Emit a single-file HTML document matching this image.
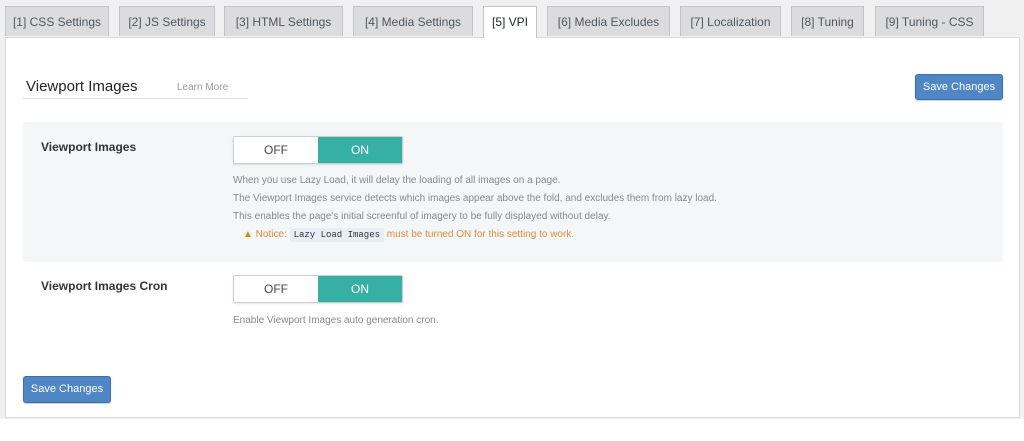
<!DOCTYPE html><html><head><style>
body{margin:0;width:1024px;height:441px;background:#f0f0f1;font-family:"Liberation Sans",sans-serif;position:relative;overflow:hidden}
.a{position:absolute}
.tab{position:absolute;top:6px;height:30px;background:#dcdcde;border:1px solid #c3c4c7;border-bottom:none;font-size:12px;color:#50575e;line-height:30px;text-align:center;box-sizing:border-box;white-space:nowrap}
.tab.on{background:#fff;color:#1d2327;height:32px;z-index:2}
.panel{position:absolute;left:5px;top:37px;width:1015px;height:381px;background:#fff;border:1px solid #dcdcde;box-sizing:border-box}
.btn{position:absolute;background:#4f86c6;border:1px solid #3b6fa8;color:#fff;font-size:11px;border-radius:3px;text-align:center;box-sizing:border-box;box-shadow:0 1px 1px rgba(0,0,0,.2)}
.tg{position:absolute;left:233px;width:170px;height:28px;border:1px solid #ccc;border-radius:2px;box-sizing:border-box;display:flex;font-size:12px;box-shadow:0 1px 2px rgba(0,0,0,.1)}
.tg div{flex:1;text-align:center;line-height:26px}
.tg .off{color:#444;background:#fff}
.tg .onb{background:#36b0a4;color:#fff}
.lbl{position:absolute;left:41px;font-size:12px;font-weight:bold;color:#333}
.d{position:absolute;left:233px;font-size:10px;color:#888;line-height:18px}
</style></head><body>
<div class="tab" style="left:5px;width:104px">[1] CSS Settings</div>
<div class="tab" style="left:119px;width:96px">[2] JS Settings</div>
<div class="tab" style="left:224px;width:119px">[3] HTML Settings</div>
<div class="tab" style="left:353px;width:120px">[4] Media Settings</div>
<div class="tab on" style="left:483px;width:54px">[5] VPI</div>
<div class="tab" style="left:547px;width:123px">[6] Media Excludes</div>
<div class="tab" style="left:680px;width:101px">[7] Localization</div>
<div class="tab" style="left:791px;width:73px">[8] Tuning</div>
<div class="tab" style="left:875px;width:109px">[9] Tuning - CSS</div>
<div class="panel"></div>
<div class="a" style="left:0;top:419px;width:1024px;height:22px;background:#fff"></div>
<div class="a" style="left:26px;top:78px;font-size:15px;color:#222">Viewport Images</div>
<div class="a" style="left:177px;top:82px;font-size:10px;color:#999">Learn More</div>
<div class="a" style="left:23px;top:98px;width:225px;height:1px;background:#ddd"></div>
<div class="btn" style="left:915px;top:74px;width:88px;height:26px;line-height:24px">Save Changes</div>
<div class="a" style="left:23px;top:122px;width:980px;height:140px;background:#f4f7f7;border-radius:3px"></div>
<div class="lbl" style="top:140px">Viewport Images</div>
<div class="tg" style="top:136px"><div class="off">OFF</div><div class="onb">ON</div></div>
<div class="d" style="top:172px">When you use Lazy Load, it will delay the loading of all images on a page.<br>The Viewport Images service detects which images appear above the fold, and excludes them from lazy load.<br>This enables the page's initial screenful of imagery to be fully displayed without delay.</div>
<div class="a" style="left:243px;top:227px;font-size:10px;color:#e38a3a;line-height:16px"><span style="color:#d98b00">▲</span> Notice: <span style="font-family:'Liberation Mono',monospace;font-size:9px;color:#333;background:#e8eef3;padding:2px 4px">Lazy Load Images</span> must be turned ON for this setting to work.</div>
<div class="lbl" style="top:279px">Viewport Images Cron</div>
<div class="tg" style="top:275px"><div class="off">OFF</div><div class="onb">ON</div></div>
<div class="d" style="top:312px">Enable Viewport Images auto generation cron.</div>
<div class="btn" style="left:23px;top:376px;width:88px;height:27px;line-height:25px">Save Changes</div>
</body></html>
